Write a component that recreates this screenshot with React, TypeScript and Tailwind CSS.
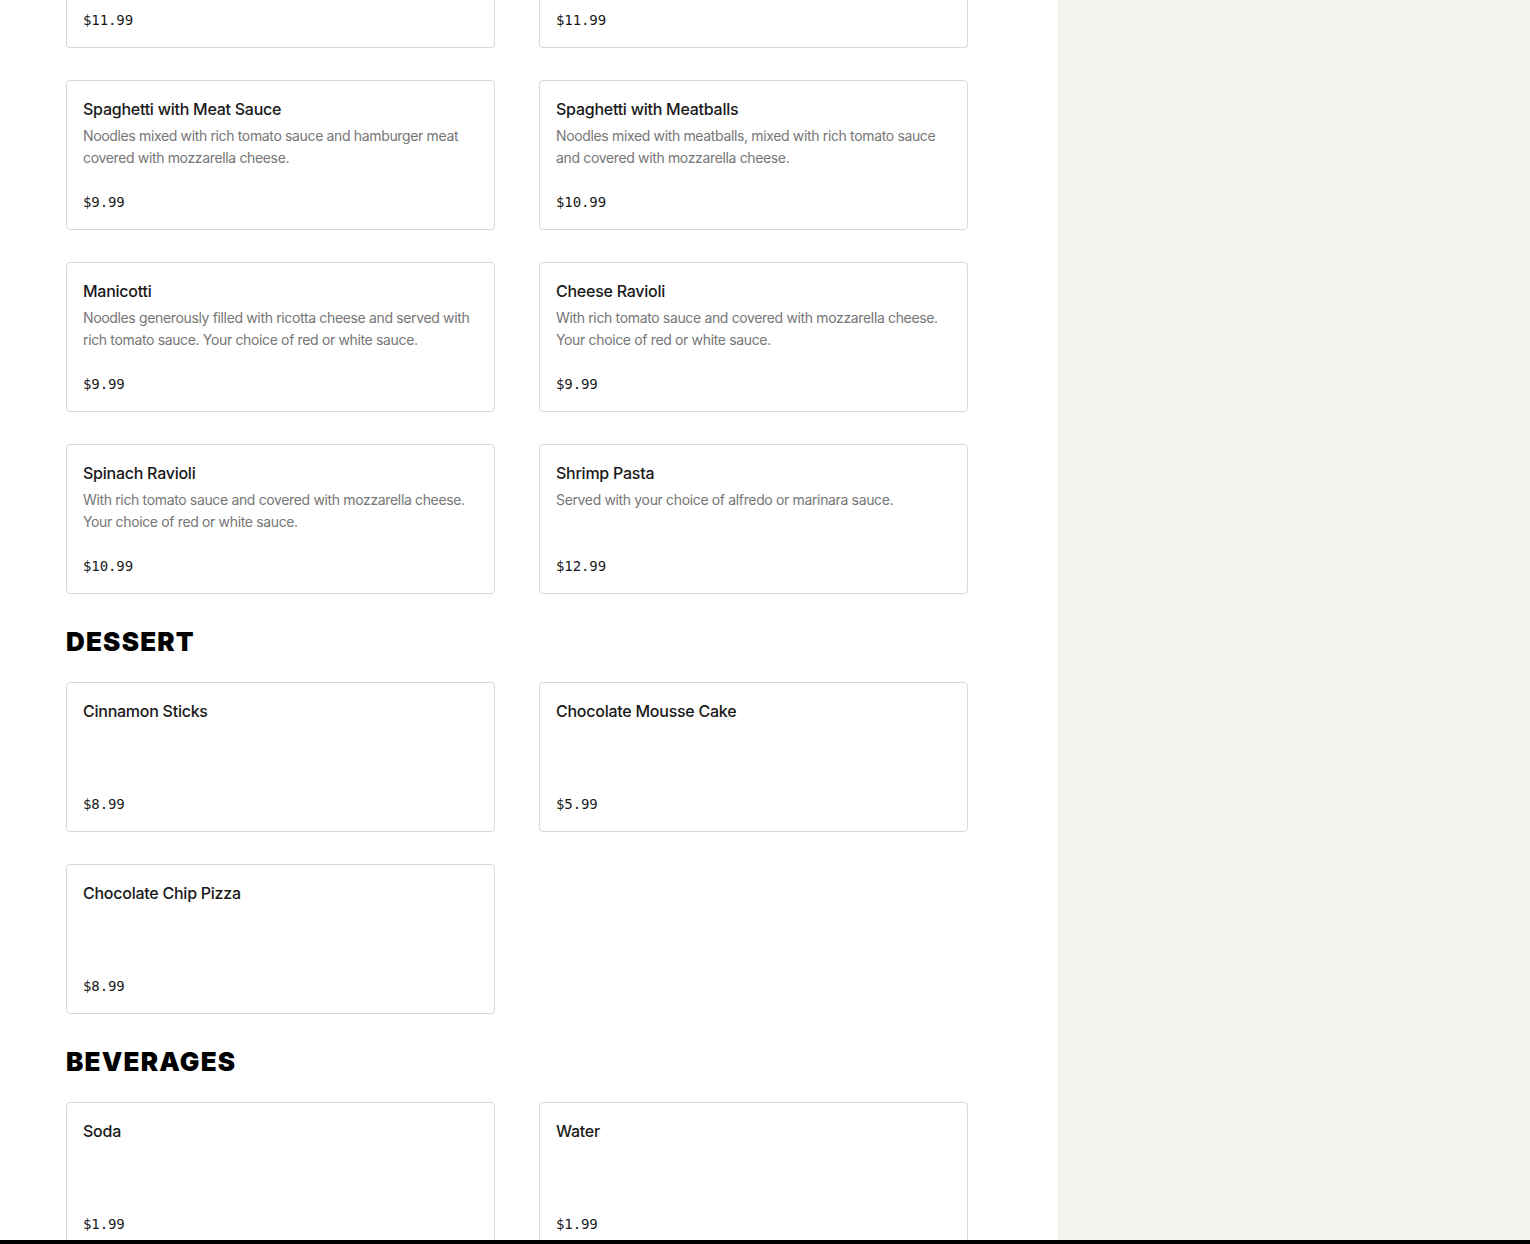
import React from "react"

type Item = { name: string; description?: string; price: string }

// first row is scrolled mostly out of view; only the prices show
const scrolledPrices = ["$11.99", "$11.99"]

const sections: { title?: string; items: Item[] }[] = [
  {
    items: [
      {
        name: "Spaghetti with Meat Sauce",
        description: "Noodles mixed with rich tomato sauce and hamburger meat covered with mozzarella cheese.",
        price: "$9.99",
      },
      {
        name: "Spaghetti with Meatballs",
        description: "Noodles mixed with meatballs, mixed with rich tomato sauce and covered with mozzarella cheese.",
        price: "$10.99",
      },
      {
        name: "Manicotti",
        description: "Noodles generously filled with ricotta cheese and served with rich tomato sauce. Your choice of red or white sauce.",
        price: "$9.99",
      },
      {
        name: "Cheese Ravioli",
        description: "With rich tomato sauce and covered with mozzarella cheese. Your choice of red or white sauce.",
        price: "$9.99",
      },
      {
        name: "Spinach Ravioli",
        description: "With rich tomato sauce and covered with mozzarella cheese. Your choice of red or white sauce.",
        price: "$10.99",
      },
      { name: "Shrimp Pasta", description: "Served with your choice of alfredo or marinara sauce.", price: "$12.99" },
    ],
  },
  {
    title: "DESSERT",
    items: [
      { name: "Cinnamon Sticks", price: "$8.99" },
      { name: "Chocolate Mousse Cake", price: "$5.99" },
      { name: "Chocolate Chip Pizza", price: "$8.99" },
    ],
  },
  {
    title: "BEVERAGES",
    items: [
      { name: "Soda", price: "$1.99" },
      { name: "Water", price: "$1.99" },
    ],
  },
]

const priceClass =
  "font-['DejaVu_Sans_Mono',monospace] text-[14px] leading-[22px] tracking-[-0.1px] text-[#191919]"

function MenuCard({ item }: { item: Item }) {
  return (
    <div className="flex h-[150px] flex-col rounded-[4px] border border-[#d9d9d9] bg-white p-4">
      <div className="text-[16px] leading-6 font-medium tracking-[-0.25px] text-[#191919]">{item.name}</div>
      {item.description && (
        <p className="mt-[4px] text-[14px] leading-[22px] tracking-[-0.35px] text-[#767676]">{item.description}</p>
      )}
      <div className={`mt-auto ${priceClass}`}>{item.price}</div>
    </div>
  )
}

export default function App() {
  return (
    <div className="flex min-h-screen overflow-hidden font-['Inter',sans-serif]">
      <main className="w-[1058px] shrink-0 bg-white pl-[66px]">
        <div className="w-[902px]">
          <div className="mb-8 grid grid-cols-[429px_429px] gap-x-[44px]">
            {scrolledPrices.map((p, i) => (
              <div key={i} className="flex h-[48px] flex-col justify-end rounded-b-[4px] border border-t-0 border-[#d9d9d9] bg-white px-4 pb-4">
                <div className={priceClass}>{p}</div>
              </div>
            ))}
          </div>
          {sections.map((section, i) => (
            <section key={i} className={i > 0 ? "mt-8" : ""}>
              {section.title && (
                <h2 className="mb-6 text-[26px] leading-8 font-black tracking-[1.2px] text-black">{section.title}</h2>
              )}
              <div className="grid grid-cols-[429px_429px] gap-x-[44px] gap-y-8">
                {section.items.map((item) => (
                  <MenuCard key={item.name} item={item} />
                ))}
              </div>
            </section>
          ))}
        </div>
      </main>
      <aside className="flex-1 bg-[#f3f2ee]" />
      <div className="fixed inset-x-0 bottom-0 h-[4px] bg-black" />
    </div>
  )
}
